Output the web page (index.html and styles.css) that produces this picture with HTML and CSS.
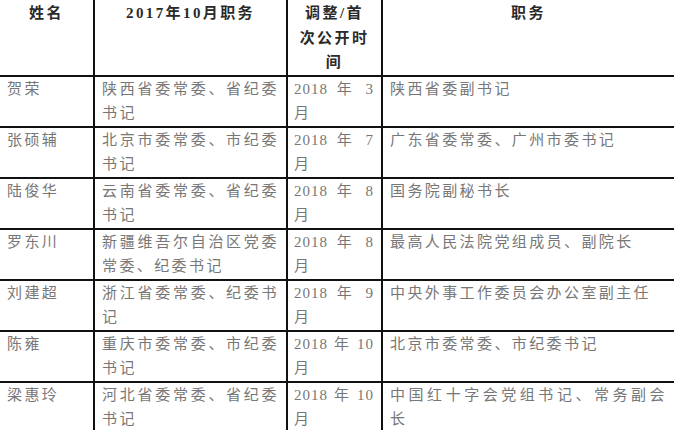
FILE: index.html
```html
<!DOCTYPE html>
<html lang="zh-CN">
<head>
<meta charset="utf-8">
<title>职务调整</title>
<link rel="stylesheet" href="styles.css">
</head>
<body>
<table class="grid">
  <colgroup>
    <col class="c-name">
    <col class="c-old">
    <col class="c-date">
    <col class="c-new">
  </colgroup>
  <thead>
    <tr>
      <th>姓名</th>
      <th>2017年10月职务</th>
      <th>调整/首<br>次公开时<br>间</th>
      <th>职务</th>
    </tr>
  </thead>
  <tbody>
    <tr><td>贺荣</td><td>陕西省委常委、省纪委书记</td><td class="date">2018 年 3 月</td><td>陕西省委副书记</td></tr>
    <tr><td>张硕辅</td><td>北京市委常委、市纪委书记</td><td class="date">2018 年 7 月</td><td>广东省委常委、广州市委书记</td></tr>
    <tr><td>陆俊华</td><td>云南省委常委、省纪委书记</td><td class="date">2018 年 8 月</td><td>国务院副秘书长</td></tr>
    <tr><td>罗东川</td><td>新疆维吾尔自治区党委常委、纪委书记</td><td class="date">2018 年 8 月</td><td>最高人民法院党组成员、副院长</td></tr>
    <tr><td>刘建超</td><td>浙江省委常委、纪委书记</td><td class="date">2018 年 9 月</td><td>中央外事工作委员会办公室副主任</td></tr>
    <tr><td>陈雍</td><td>重庆市委常委、市纪委书记</td><td class="date">2018 年 10 月</td><td>北京市委常委、市纪委书记</td></tr>
    <tr><td>梁惠玲</td><td>河北省委常委、省纪委书记</td><td class="date">2018 年 10 月</td><td>中国红十字会党组书记、常务副会长</td></tr>
  </tbody>
</table>
</body>
</html>
```

FILE: styles.css
```css
html, body {
  margin: 0;
  padding: 0;
  background: #ffffff;
}

body {
  font-family: "Liberation Serif", "Noto Sans CJK SC", serif;
  font-size: 15px;
  overflow: hidden;
}

.grid {
  width: 674px;
  table-layout: fixed;
  border-collapse: collapse;
  border-style: hidden;
}

.c-name { width: 94px; }
.c-old { width: 193px; }
.c-date { width: 95px; }
.c-new { width: 292px; }

.grid th,
.grid td {
  border: 2px solid #111111;
  vertical-align: top;
  line-height: 24.5px;
  letter-spacing: 2.4px;
}

.grid th {
  padding: 1px 7px 0 7px;
  font-weight: 700;
  color: #2a2a2a;
  text-align: center;
}

.grid td {
  padding: 0 7px 0 7px;
  color: #777777;
  text-align: justify;
  text-align-last: left;
}

.grid td.date {
  letter-spacing: 1px;
  padding-left: 6px;
}
```
